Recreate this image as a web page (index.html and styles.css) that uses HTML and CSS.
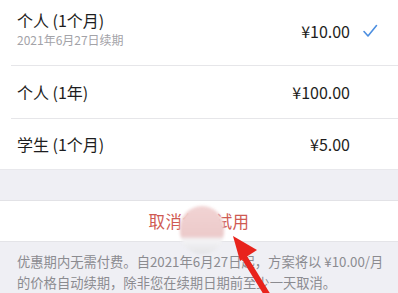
FILE: index.html
```html
<!DOCTYPE html>
<html>
  <head>
    <title>订阅</title>
    <meta charset="utf-8" />
    <link rel="stylesheet" href="styles.css">
  </head>
  <body>
    <div class="page">
      <div class="plans">
        <div class="plan plan-first">
          <div class="plan-info">
            <div class="plan-name">个人 (1个月)</div>
            <div class="plan-date">2021年6月27日续期</div>
          </div>
          <div class="plan-price">¥10.00</div>
          <div class="check">
            <svg width="16" height="14" viewBox="0 0 16 14">
              <path d="M2 7.5 L6 12 L14.5 1.5" fill="none" stroke="#4d8fe0" stroke-width="1.6" stroke-linecap="round" stroke-linejoin="round" />
            </svg>
          </div>
        </div>
        <div class="plan">
          <div class="plan-info">
            <div class="plan-name">个人 (1年)</div>
          </div>
          <div class="plan-price">¥100.00</div>
          <div class="check"></div>
        </div>
        <div class="plan">
          <div class="plan-info">
            <div class="plan-name">学生 (1个月)</div>
          </div>
          <div class="plan-price">¥5.00</div>
          <div class="check"></div>
        </div>
      </div>

      <div class="gap"></div>

      <div class="cancel">
        <span class="cancel-text">取消免费试用</span>
      </div>

      <div class="note">
        优惠期内无需付费。自2021年6月27日起，方案将以 ¥10.00/月的价格自动续期，除非您在续期日期前至少一天取消。
      </div>

      <div class="smudge"></div>
      <svg class="arrow" width="80" height="70" viewBox="0 0 80 70">
        <path d="M42 70 L10 18" stroke="#e8231c" stroke-width="6" stroke-linecap="butt" />
        <polygon points="2,2 26,16 9,27" fill="#e8231c" />
      </svg>
    </div>
  </body>
</html>
```

FILE: styles.css
```css
body {
  margin: 0;
  background: #efeff4;
  font-family: "Noto Sans CJK SC", "Noto Sans", sans-serif;
  color: #1d1d20;
}
.page {
  position: relative;
  width: 398px;
  height: 293px;
  overflow: hidden;
}
.plans {
  background: #fff;
}
.plan {
  display: flex;
  align-items: center;
  height: 52px;
  padding-right: 20px;
  margin-left: 11px;
  padding-left: 6px;
  border-top: 1px solid #e6e6e9;
}
.plan-first {
  height: 61px;
  padding-bottom: 4px;
  border-top: none;
}
.plan:last-child {
  height: 50px;
}
.plan-info {
  flex: 1;
}
.plan-first .plan-info {
  align-self: flex-start;
  padding-top: 10px;
}
.plan-name {
  font-size: 16px;
  line-height: 20px;
}
.plan-date {
  font-size: 12px;
  line-height: 16px;
  margin-top: 2px;
  color: #a3a3a8;
}
.plan-price {
  font-size: 16px;
}
.check {
  width: 16px;
  height: 14px;
  margin-left: 12px;
  display: flex;
}
.gap {
  height: 30px;
  border-top: 1px solid #e8e8ec;
}
.cancel {
  background: #fff;
  height: 40px;
  display: flex;
  align-items: center;
  justify-content: center;
  border-top: 1px solid #e2e2e6;
  border-bottom: 1px solid #e4e4e8;
}
.cancel-text {
  color: #cf5a52;
  font-size: 16.5px;
  letter-spacing: 0.3px;
}
.note {
  padding: 9px 8px 0 17px;
  font-size: 13.3px;
  line-height: 21px;
  color: #8b8b90;
}
.smudge {
  position: absolute;
  left: 180px;
  top: 206px;
  width: 44px;
  height: 48px;
  border-radius: 22px;
  background: linear-gradient(#f1d3d3 0%, #eccaca 62%, #f4f4f6 70%, #e3e3e6 100%);
  filter: blur(1.5px);
}
.arrow {
  position: absolute;
  left: 231px;
  top: 234px;
}
```
